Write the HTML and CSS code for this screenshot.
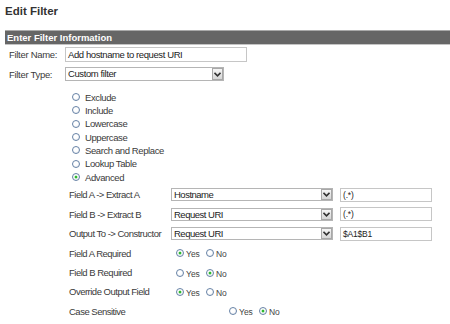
FILE: index.html
```html
<!DOCTYPE html>
<html lang="en">
<head>
  <meta charset="UTF-8" />
  <title>Edit Filter</title>
  <link rel="stylesheet" href="styles.css">
</head>
<body>

<div class="page">
  <h1 class="title">Edit Filter</h1>

  <div class="section">
    <div class="section-head">Enter Filter Information</div>

    <div class="form">
      <div class="row">
        <span class="lbl">Filter Name:</span>
        <div class="textbox name-box">Add hostname to request URI</div>
      </div>

      <div class="row row-type">
        <span class="lbl">Filter Type:</span>
        <div class="select type-select">
          <span class="select-text">Custom filter</span>
          <span class="arrow"><svg width="7" height="5" viewBox="0 0 7 5"><path d="M0.5 0.8 L3.5 3.8 L6.5 0.8" fill="none" stroke="#333" stroke-width="1.6"/></svg></span>
        </div>
      </div>

      <ul class="types">
        <li><span class="radio"></span>Exclude</li>
        <li><span class="radio"></span>Include</li>
        <li><span class="radio"></span>Lowercase</li>
        <li><span class="radio"></span>Uppercase</li>
        <li><span class="radio"></span>Search and Replace</li>
        <li><span class="radio"></span>Lookup Table</li>
        <li><span class="radio checked"></span>Advanced</li>
      </ul>

      <div class="advanced">
        <div class="adv-row">
          <span class="adv-lbl">Field A -&gt; Extract A</span>
          <div class="select field-select">
            <span class="select-text">Hostname</span>
            <span class="arrow"><svg width="7" height="5" viewBox="0 0 7 5"><path d="M0.5 0.8 L3.5 3.8 L6.5 0.8" fill="none" stroke="#333" stroke-width="1.6"/></svg></span>
          </div>
          <div class="textbox pattern">(.*)</div>
        </div>
        <div class="adv-row">
          <span class="adv-lbl">Field B -&gt; Extract B</span>
          <div class="select field-select">
            <span class="select-text">Request URI</span>
            <span class="arrow"><svg width="7" height="5" viewBox="0 0 7 5"><path d="M0.5 0.8 L3.5 3.8 L6.5 0.8" fill="none" stroke="#333" stroke-width="1.6"/></svg></span>
          </div>
          <div class="textbox pattern">(.*)</div>
        </div>
        <div class="adv-row">
          <span class="adv-lbl">Output To -&gt; Constructor</span>
          <div class="select field-select">
            <span class="select-text">Request URI</span>
            <span class="arrow"><svg width="7" height="5" viewBox="0 0 7 5"><path d="M0.5 0.8 L3.5 3.8 L6.5 0.8" fill="none" stroke="#333" stroke-width="1.6"/></svg></span>
          </div>
          <div class="textbox pattern">$A1$B1</div>
        </div>

        <div class="adv-row">
          <span class="adv-lbl">Field A Required</span>
          <div class="yesno">
            <span class="radio checked"></span><span class="opt">Yes</span>
            <span class="radio"></span><span class="opt">No</span>
          </div>
        </div>
        <div class="adv-row">
          <span class="adv-lbl">Field B Required</span>
          <div class="yesno">
            <span class="radio"></span><span class="opt">Yes</span>
            <span class="radio checked"></span><span class="opt">No</span>
          </div>
        </div>
        <div class="adv-row">
          <span class="adv-lbl">Override Output Field</span>
          <div class="yesno">
            <span class="radio checked"></span><span class="opt">Yes</span>
            <span class="radio"></span><span class="opt">No</span>
          </div>
        </div>
        <div class="adv-row">
          <span class="adv-lbl">Case Sensitive</span>
          <div class="yesno yesno-case">
            <span class="radio"></span><span class="opt">Yes</span>
            <span class="radio checked"></span><span class="opt">No</span>
          </div>
        </div>
      </div>
    </div>
  </div>
</div>

</body>
</html>
```

FILE: styles.css
```css
* {
  margin: 0;
  padding: 0;
  box-sizing: border-box;
}

body {
  font-family: "Liberation Sans", Arial, sans-serif;
  background: #fff;
  color: #3a3a3a;
}

.page {
  padding-left: 5px;
}

.title {
  margin-top: 4px;
  font-size: 11.5px;
  line-height: 14px;
  font-weight: bold;
  color: #333;
}

.section {
  margin-top: 12px;
}

.section-head {
  height: 15px;
  background: #666;
  border-top: 1px solid #aaa;
  border-bottom: 1px solid #c4c4c4;
  padding-left: 2px;
  color: #fff;
  font-size: 9.5px;
  font-weight: bold;
  line-height: 13px;
}

.form {
  padding: 2px 0 0 4px;
  font-size: 9.5px;
  letter-spacing: -0.4px;
}

.row {
  display: flex;
  align-items: center;
  height: 15px;
}

.row-type {
  margin-top: 5px;
  height: 14px;
}

.lbl {
  width: 56px;
  letter-spacing: -0.3px;
}

.textbox {
  height: 15px;
  border: 1px solid #c6c6c6;
  padding-left: 2px;
  line-height: 13px;
  color: #222;
  background: #fff;
}

.name-box {
  width: 182px;
}

.select {
  display: flex;
  align-items: stretch;
  height: 14px;
  border: 1px solid #b5b5b5;
  background: #fff;
}

.select-text {
  flex: 1;
  padding-left: 2px;
  line-height: 12px;
  color: #222;
}

.arrow {
  width: 11px;
  display: flex;
  align-items: center;
  justify-content: center;
  background: linear-gradient(#f6f6f6, #d6d6d6);
  border: 1px solid #a8a8a8;
}

.type-select {
  width: 159px;
}

.types {
  list-style: none;
  margin-top: 9.5px;
  padding-left: 63px;
}

.types li {
  display: flex;
  align-items: center;
  height: 13.33px;
}

.types .radio {
  margin-right: 5px;
}

.radio {
  display: inline-block;
  width: 8px;
  height: 8px;
  border: 1px solid #6782a6;
  border-radius: 50%;
  background: radial-gradient(circle at 40% 35%, #fff 40%, #e4e8ee);
  position: relative;
  flex-shrink: 0;
}

.radio.checked::after {
  content: "";
  position: absolute;
  left: 2px;
  top: 2px;
  width: 2px;
  height: 2px;
  border-radius: 50%;
  background: #22b022;
  box-shadow: 0 0 0 0.5px #5c5;
}

.advanced {
  margin-top: 1.5px;
  padding-left: 60px;
}

.adv-row {
  display: flex;
  align-items: center;
  height: 19.4px;
}

.adv-lbl {
  width: 102px;
  letter-spacing: -0.5px;
}

.field-select {
  width: 162px;
  height: 13px;
}

.field-select .select-text {
  line-height: 11px;
  letter-spacing: -0.5px;
}

.pattern {
  width: 92px;
  height: 14px;
  margin-left: 7px;
  font-size: 8.5px;
  line-height: 12px;
  letter-spacing: -0.2px;
}

.yesno {
  display: flex;
  align-items: center;
  padding-left: 5px;
  font-size: 8.5px;
  letter-spacing: 0;
  color: #444;
}

.yesno .opt {
  margin: 2px 6px 0 2px;
}

.yesno-case {
  padding-left: 58px;
}
```
